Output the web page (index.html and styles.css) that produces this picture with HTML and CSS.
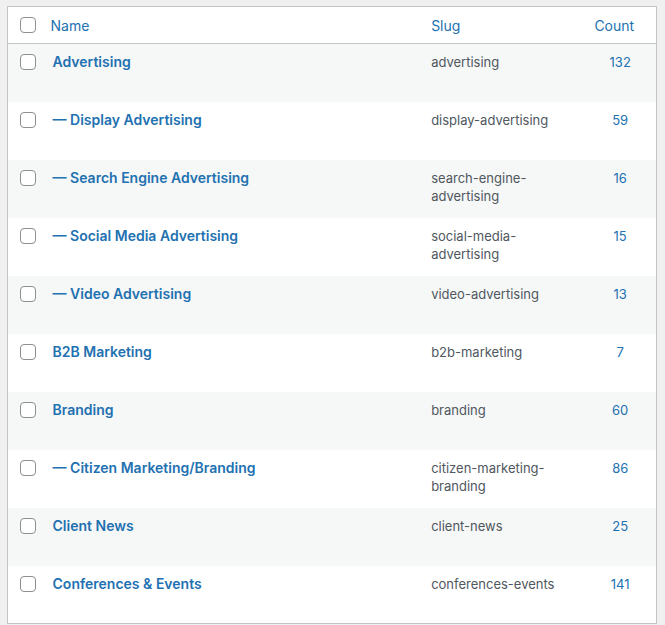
FILE: index.html
```html
<!DOCTYPE html>
<html>
<head>
<meta charset="utf-8">
<link rel="stylesheet" href="styles.css">
</head>
<body>
<table class="list">
  <colgroup>
    <col class="c-check">
    <col class="c-name">
    <col class="c-slug">
    <col class="c-count">
  </colgroup>
  <thead>
    <tr>
      <th class="check"><span class="cb"></span></th>
      <th class="name"><a>Name</a></th>
      <th class="slug"><a>Slug</a></th>
      <th class="count"><a>Count</a></th>
    </tr>
  </thead>
  <tbody>
    <tr class="alt"><td class="check"><span class="cb"></span></td><td class="name"><a>Advertising</a></td><td class="slug">advertising</td><td class="count"><a>132</a></td></tr>
    <tr><td class="check"><span class="cb"></span></td><td class="name"><a>— Display Advertising</a></td><td class="slug">display-advertising</td><td class="count"><a>59</a></td></tr>
    <tr class="alt"><td class="check"><span class="cb"></span></td><td class="name"><a>— Search Engine Advertising</a></td><td class="slug">search-engine-advertising</td><td class="count"><a>16</a></td></tr>
    <tr><td class="check"><span class="cb"></span></td><td class="name"><a>— Social Media Advertising</a></td><td class="slug">social-media-advertising</td><td class="count"><a>15</a></td></tr>
    <tr class="alt"><td class="check"><span class="cb"></span></td><td class="name"><a>— Video Advertising</a></td><td class="slug">video-advertising</td><td class="count"><a>13</a></td></tr>
    <tr><td class="check"><span class="cb"></span></td><td class="name"><a>B2B Marketing</a></td><td class="slug">b2b-marketing</td><td class="count"><a>7</a></td></tr>
    <tr class="alt"><td class="check"><span class="cb"></span></td><td class="name"><a>Branding</a></td><td class="slug">branding</td><td class="count"><a>60</a></td></tr>
    <tr><td class="check"><span class="cb"></span></td><td class="name"><a>— Citizen Marketing/Branding</a></td><td class="slug">citizen-marketing-branding</td><td class="count"><a>86</a></td></tr>
    <tr class="alt"><td class="check"><span class="cb"></span></td><td class="name"><a>Client News</a></td><td class="slug">client-news</td><td class="count"><a>25</a></td></tr>
    <tr><td class="check"><span class="cb"></span></td><td class="name"><a>Conferences &amp; Events</a></td><td class="slug">conferences-events</td><td class="count"><a>141</a></td></tr>
  </tbody>
</table>
</body>
</html>
```
FILE: styles.css
```css
html, body {
  background: #f0f0f1;
}
body {
  margin: 6px 8px 0 7px;
  font-family: Inter, "Liberation Sans", sans-serif;
  font-size: 13px;
  color: #50575e;
}
.list {
  width: 650px;
  border: 1px solid #c3c4c7;
  border-collapse: collapse;
  table-layout: fixed;
  background: #fff;
}
.c-check { width: 35px; }
.c-name { width: 378px; }
.c-slug { width: 163px; }
.c-count { width: 72px; }
a {
  color: #2271b1;
}
thead th {
  height: 37px;
  box-sizing: border-box;
  border-bottom: 1px solid #c3c4c7;
  text-align: left;
  font-weight: 400;
  font-size: 14px;
  padding: 0 10px;
  vertical-align: middle;
}
thead th.name { padding-left: 8px; }
thead th.count { text-align: right; padding-right: 28px; }
thead th.check { padding: 0 0 0 12px; }
.cb {
  display: block;
  width: 14px;
  height: 14px;
  border: 1px solid #8c8f94;
  border-radius: 4px;
  background: #fff;
}
tbody tr {
  height: 58px;
}
tbody tr.alt { background: #f6f7f7; }
tbody td {
  vertical-align: top;
  padding: 8px 10px;
  line-height: 18px;
  box-sizing: border-box;
}
tbody td.check { padding: 10px 0 0 12px; }
tbody td.name {
  font-size: 14px;
  font-weight: 600;
  padding-top: 9px;
}
tbody td.slug { padding-top: 9px; }
tbody td.count {
  text-align: center;
  padding-top: 9px;
}
```
